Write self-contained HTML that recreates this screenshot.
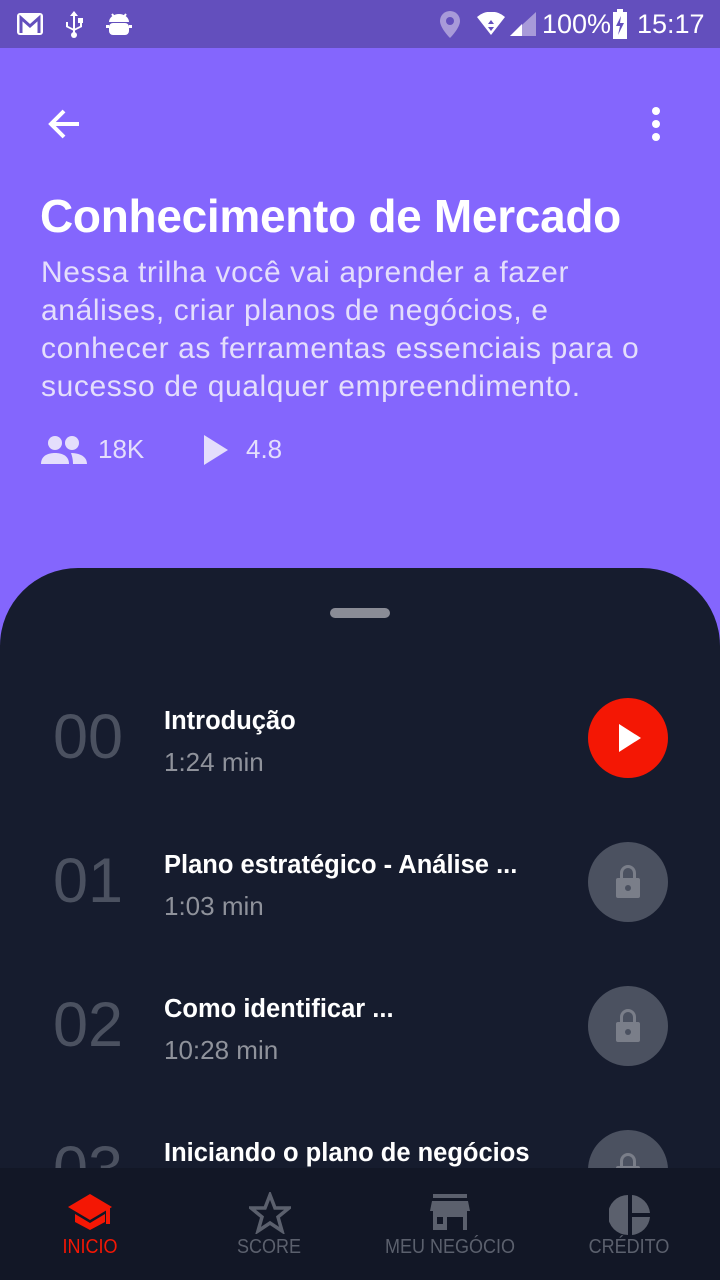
<!DOCTYPE html>
<html><head><meta charset="utf-8"><style>
*{margin:0;padding:0;box-sizing:border-box}
body{width:720px;height:1280px;overflow:hidden;background:#8466fd;font-family:"Liberation Sans",sans-serif;position:relative}
.sb{position:absolute;top:0;left:0;width:720px;height:48px;background:#634fbd;color:#fff}
.abs{position:absolute}
h1{position:absolute;left:40px;top:189px;font-size:46px;font-weight:bold;color:#fff;letter-spacing:-0.3px;white-space:nowrap}
.desc{position:absolute;left:41px;top:254px;width:680px;font-size:30px;letter-spacing:0.6px;line-height:38px;color:#e4defc;white-space:nowrap}
.stats{position:absolute;top:434px;font-size:26px;color:#e4defc}
.panel{position:absolute;left:0;top:568px;width:720px;height:712px;background:#161c2e;border-radius:78px 78px 0 0}
.handle{position:absolute;left:330px;top:608px;width:60px;height:10px;border-radius:5px;background:#8a8c96}
.row{position:absolute;left:0;width:720px;height:90px}
.num{position:absolute;left:53px;top:-2px;font-size:63px;color:#4b5160}
.t{position:absolute;left:164px;top:4px;font-size:25.5px;font-weight:bold;color:#fff}
.d{position:absolute;left:164px;top:44px;font-size:26px;color:#8f929b}
.btn{position:absolute;left:588px;top:-5px;width:80px;height:80px;border-radius:50%;background:#4b5160}
.nav{position:absolute;left:0;top:1168px;width:720px;height:112px;background:#121726}
.nl{position:absolute;top:68px;font-size:20px;color:#5b606d;text-align:center;width:200px;transform:scaleX(0.9)}
</style></head><body>
<div class="sb">
<svg class="abs" style="left:16px;top:12px" width="28" height="24"><rect x="1" y="1" width="26" height="22" rx="3" fill="#fff"/><path d="M5 21V6l9 8 9-8v15" stroke="#634fbd" stroke-width="3" fill="none"/></svg>
<svg class="abs" style="left:62px;top:10px" width="24" height="28" fill="#fff"><path d="M11 2h2v22h-2z"/><circle cx="12" cy="25" r="3"/><path d="M8 6l4-5 4 5z"/><path d="M4 12h2v4l6 3v2l-8-4z"/><rect x="16" y="8" width="5" height="5"/><path d="M18 13h2v4l-8 4v-2l6-3z"/></svg>
<svg class="abs" style="left:106px;top:12px" width="26" height="26" fill="#fff"><path d="M3 10a10 8 0 0 1 20 0z"/><rect x="3" y="11" width="20" height="12" rx="4"/><path d="M6 2l3 4M20 2l-3 4" stroke="#fff" stroke-width="2"/><rect x="0" y="13" width="3" height="3"/><rect x="23" y="13" width="3" height="3"/></svg>
<svg class="abs" style="left:438px;top:10px" width="24" height="28"><path d="M12 1a10 10 0 0 1 10 10c0 7-10 17-10 17S2 18 2 11A10 10 0 0 1 12 1z" fill="#a89ad9"/><circle cx="12" cy="11" r="4" fill="#634fbd"/></svg>
<svg class="abs" style="left:476px;top:12px" width="30" height="24"><path d="M1 5a21 21 0 0 1 28 0L15 23z" fill="#fff"/><path d="M15 8l3 4h-6zM15 19l3-4h-6z" fill="#634fbd"/></svg>
<svg class="abs" style="left:510px;top:12px" width="26" height="24"><path d="M26 0v24H0z" fill="#a89ad9"/><path d="M12 12v12H0z" fill="#fff"/></svg>
<div class="abs" style="left:542px;top:9px;font-size:27px">100%</div>
<svg class="abs" style="left:612px;top:9px" width="16" height="30"><rect x="5" y="0" width="6" height="3" fill="#fff"/><rect x="1" y="3" width="14" height="27" fill="#fff"/><path d="M9 7l-5 10h4l-2 9 6-12h-4z" fill="#634fbd"/></svg>
<div class="abs" style="left:637px;top:9px;font-size:27px">15:17</div>
</div>
<svg class="abs" style="left:46px;top:106px" width="36" height="36"><path d="M33 18H6M18 5L5 18l13 13" stroke="#fff" stroke-width="4" fill="none"/></svg>
<svg class="abs" style="left:648px;top:106px" width="16" height="36" fill="#fff"><circle cx="8" cy="5" r="4"/><circle cx="8" cy="18" r="4"/><circle cx="8" cy="31" r="4"/></svg>
<h1>Conhecimento de Mercado</h1>
<div class="desc">Nessa trilha você vai aprender a fazer<br>análises, criar planos de negócios, e<br>conhecer as ferramentas essenciais para o<br>sucesso de qualquer empreendimento.</div>
<svg class="abs" style="left:41px;top:434px" width="46" height="32" fill="#e4defc"><circle cx="14" cy="9" r="7"/><circle cx="31" cy="9" r="7"/><path d="M0 30c0-9 8-11 14-11s14 2 14 11z"/><path d="M30 19c6 0 16 2 16 11H32c0-5-1-8-2-11z"/></svg>
<div class="stats" style="left:98px">18K</div>
<svg class="abs" style="left:203px;top:435px" width="26" height="30"><path d="M1 0l24 15L1 30z" fill="#e4defc"/></svg>
<div class="stats" style="left:246px">4.8</div>
<div class="panel"></div>
<div class="handle"></div>
<div class="row" style="top:703px"><div class="num">00</div><div class="t">Introdução</div><div class="d">1:24 min</div><div class="btn" style="background:#f41704"><svg style="position:absolute;left:31px;top:26px" width="24" height="28"><path d="M0 0l22 14L0 28z" fill="#fff"/></svg></div></div>
<div class="row" style="top:847px"><div class="num">01</div><div class="t">Plano estratégico - Análise ...</div><div class="d">1:03 min</div><div class="btn"><svg style="position:absolute;left:24px;top:20px" width="32" height="40" fill="#7a7e89"><path d="M8 16v-5a8 8 0 0 1 16 0v5h-3v-5a5 5 0 0 0-10 0v5z"/><rect x="4" y="16" width="24" height="20" rx="2"/><circle cx="16" cy="26" r="3" fill="#4b5160"/></svg></div></div>
<div class="row" style="top:991px"><div class="num">02</div><div class="t">Como identificar ...</div><div class="d">10:28 min</div><div class="btn"><svg style="position:absolute;left:24px;top:20px" width="32" height="40" fill="#7a7e89"><path d="M8 16v-5a8 8 0 0 1 16 0v5h-3v-5a5 5 0 0 0-10 0v5z"/><rect x="4" y="16" width="24" height="20" rx="2"/><circle cx="16" cy="26" r="3" fill="#4b5160"/></svg></div></div>
<div class="row" style="top:1135px"><div class="num">03</div><div class="t">Iniciando o plano de negócios</div><div class="btn"><svg style="position:absolute;left:24px;top:20px" width="32" height="40" fill="#7a7e89"><path d="M8 16v-5a8 8 0 0 1 16 0v5h-3v-5a5 5 0 0 0-10 0v5z"/><rect x="4" y="16" width="24" height="20" rx="2"/></svg></div></div>
<div class="nav">
<svg class="abs" style="left:68px;top:26px" width="46" height="40" fill="#f41704"><path d="M0 13L22 0l22 13-22 13z"/><path d="M7 20l15 9 15-9v8l-15 8-15-8z"/><rect x="38" y="14" width="4" height="16"/></svg>
<div class="nl" style="left:-10px;color:#f41704">INICIO</div>
<svg class="abs" style="left:249px;top:24px" width="42" height="42"><path d="M21 3l5 13h14l-11 9 4 14-12-8-12 8 4-14-11-9h14z" stroke="#5b606d" stroke-width="3.5" fill="none" stroke-linejoin="miter"/></svg>
<div class="nl" style="left:169px">SCORE</div>
<svg class="abs" style="left:430px;top:26px" width="40" height="36" fill="#5b606d"><rect x="3" y="0" width="34" height="4"/><path d="M2 7h36l2 10H0z"/><path d="M3 17h34v19h-4V23H17v13H3z"/><rect x="7" y="23" width="6" height="7" fill="#121726"/></svg>
<div class="nl" style="left:350px">MEU NEGÓCIO</div>
<svg class="abs" style="left:609px;top:26px" width="42" height="42" fill="#5b606d"><path d="M19 1A20 20 0 0 0 19 41z"/><path d="M23 1A20 20 0 0 1 41 19H23z"/><path d="M23 23h18A20 20 0 0 1 23 41z"/></svg>
<div class="nl" style="left:529px">CRÉDITO</div>
</div>
</body></html>
